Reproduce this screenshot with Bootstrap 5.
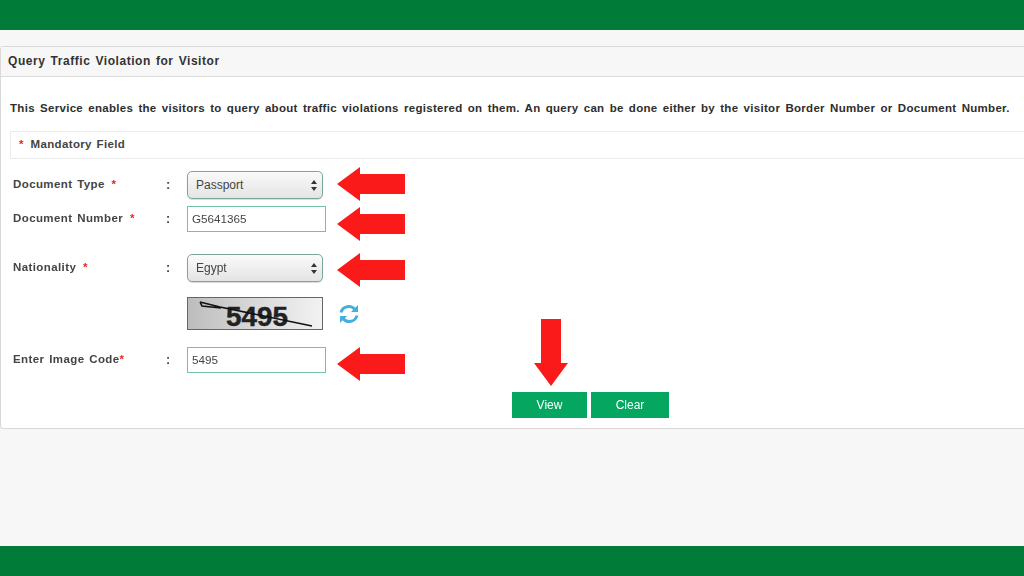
<!DOCTYPE html>
<html lang="en">
<head>
<meta charset="utf-8">
<title>Query Traffic Violation for Visitor</title>
<link href="https://cdn.jsdelivr.net/npm/bootstrap@5.3.0/dist/css/bootstrap.min.css" rel="stylesheet">
<style>
html,body{height:576px;overflow:hidden}
body{background:#f7f7f7;font-family:"Liberation Sans",Arial,sans-serif;color:#3c3c3c;position:relative}
.band{height:30px;background:#007c38;flex:none}
.page-wrap{height:576px}
.main-area{flex:1 1 auto;padding-top:16px}
.panel{border:1px solid #d9d9d9;border-right:0;border-radius:3px 0 0 3px;background:#fff;height:383px;filter:blur(.35px)}
.panel-head{height:30px;background:#f7f7f7;border-bottom:1px solid #dcdcdc;padding:0 7px;font-size:12px;font-weight:700;letter-spacing:.55px;word-spacing:1.2px;line-height:28px;color:#333}
.intro{font-size:11.5px;font-weight:700;letter-spacing:.3px;word-spacing:1.7px;margin:24px 0 0 9px;line-height:14px;white-space:nowrap;color:#2e2e2e}
.mand{margin:16px 0 0 9px;height:28px;border-top:1px solid #ececec;border-bottom:1px solid #ececec;border-left:1px solid #ececec;padding-left:8px;font-size:11.5px;font-weight:700;letter-spacing:.35px;word-spacing:1.2px;line-height:25px;color:#444}
.req{color:#e02a2a}
.mand .req{margin-right:2px}
.lbl .req-gap{margin-left:2px}
.field-row{display:flex;align-items:center}
.lbl{width:165px;padding-left:12px;font-size:11.5px;font-weight:700;letter-spacing:.4px;word-spacing:1.2px;color:#444;white-space:nowrap}
.colon{width:21px;font-size:12.5px;font-weight:700;color:#444}
.sel-box{width:136px;height:28px;border:1.5px solid #7aa898;border-radius:5px;background:linear-gradient(#fafafa,#e4e4e4);font-size:12px;color:#444;padding-left:8px;display:flex;align-items:center;justify-content:space-between;padding-right:5px;box-shadow:0 1px 1px rgba(0,0,0,.15)}
.txt-box{width:139px;height:26px;border:1.5px solid #74c0a8;background:#fff;font-size:11.7px;color:#444;padding:0 4px;line-height:23px}
.r1{margin-top:12px}
.r2{margin-top:7px}
.r3{margin-top:22px}
.r4{margin-top:15px;padding-left:186px;gap:15px}
.r5{margin-top:17px}
.captcha{display:block;width:136px;height:33px;border:1px solid #666;overflow:visible}
.btn-row{margin-top:19px;padding-left:511px;gap:4px}
.go-btn{height:26px;border-radius:0;background:#05a660;border:0;color:#fff;font-size:12px;padding:0;line-height:26px}
.go-btn:hover{background:#05a660;color:#fff}
.w-view{width:75px}
.w-clear{width:78px}
.mark-arrow{position:absolute;display:block}
.a1{left:337px;top:167px}
.a2{left:337px;top:207px}
.a3{left:337px;top:253px}
.a4{left:337px;top:347px}
.a5{left:534px;top:319px}
</style>
</head>
<body>
<div class="page-wrap d-flex flex-column">
  <div class="band"></div>
  <div class="main-area">
    <div class="panel">
      <div class="panel-head">Query Traffic Violation for Visitor</div>
      <div class="intro">This Service enables the visitors to query about traffic violations registered on them. An query can be done either by the visitor Border Number or Document Number.</div>
      <div class="mand"><span class="req">*</span> Mandatory Field</div>
      <div class="field-row r1">
        <div class="lbl">Document Type <span class="req req-gap">*</span></div><div class="colon">:</div>
        <div class="sel-box"><span>Passport</span><svg width="6" height="11" viewBox="0 0 6 11"><path d="M3 0 6 4H0zM3 11 0 7h6z" fill="#333"/></svg></div>
      </div>
      <div class="field-row r2">
        <div class="lbl">Document Number <span class="req req-gap">*</span></div><div class="colon">:</div>
        <div class="txt-box">G5641365</div>
      </div>
      <div class="field-row r3">
        <div class="lbl">Nationality <span class="req req-gap">*</span></div><div class="colon">:</div>
        <div class="sel-box"><span>Egypt</span><svg width="6" height="11" viewBox="0 0 6 11"><path d="M3 0 6 4H0zM3 11 0 7h6z" fill="#333"/></svg></div>
      </div>
      <div class="field-row r4">
        <svg class="captcha" viewBox="0 0 134 31">
          <defs><linearGradient id="cg" x1="0" x2="1" y1="0" y2="0"><stop offset="0" stop-color="#bdbdbd"/><stop offset=".45" stop-color="#d6d6d6"/><stop offset="1" stop-color="#f2f2f2"/></linearGradient></defs>
          <rect width="134" height="31" fill="url(#cg)"/>
          <text x="38" y="28" font-family="Liberation Sans" font-weight="700" font-size="27" fill="#222" stroke="#222" stroke-width=".4" textLength="62" lengthAdjust="spacingAndGlyphs">5495</text>
          <path d="M12 4 32 9 124 28M12 4 14 8 33 10" stroke="#111" stroke-width="1.6" fill="none"/>
        </svg>
        <svg width="22" height="22" viewBox="0 0 22 22" fill="none" stroke="#45b0de" stroke-width="3"><path d="M3 9.5A8 8 0 0 1 17 6.5"/><path d="M19 12.5A8 8 0 0 1 5 15.5"/><path d="M20 2v7h-7z" fill="#45b0de" stroke="none"/><path d="M2 20v-7h7z" fill="#45b0de" stroke="none"/></svg>
      </div>
      <div class="field-row r5">
        <div class="lbl">Enter Image Code<span class="req">*</span></div><div class="colon">:</div>
        <div class="txt-box">5495</div>
      </div>
      <div class="d-flex btn-row">
        <button type="button" class="btn go-btn w-view">View</button>
        <button type="button" class="btn go-btn w-clear">Clear</button>
      </div>
    </div>
  </div>
  <div class="band"></div>
</div>
<svg class="mark-arrow a1" width="68" height="34" viewBox="0 0 68 34"><path d="M0 17 23 0V7H68V27H23V34Z" fill="#fb1a1a"/></svg>
<svg class="mark-arrow a2" width="68" height="34" viewBox="0 0 68 34"><path d="M0 17 23 0V7H68V27H23V34Z" fill="#fb1a1a"/></svg>
<svg class="mark-arrow a3" width="68" height="34" viewBox="0 0 68 34"><path d="M0 17 23 0V7H68V27H23V34Z" fill="#fb1a1a"/></svg>
<svg class="mark-arrow a4" width="68" height="34" viewBox="0 0 68 34"><path d="M0 17 23 0V7H68V27H23V34Z" fill="#fb1a1a"/></svg>
<svg class="mark-arrow a5" width="34" height="67" viewBox="0 0 34 67"><path d="M17 67 0 44H7V0H27V44H34Z" fill="#fb1a1a"/></svg>
<script src="https://cdn.jsdelivr.net/npm/bootstrap@5.3.0/dist/js/bootstrap.bundle.min.js"></script>
</body>
</html>
